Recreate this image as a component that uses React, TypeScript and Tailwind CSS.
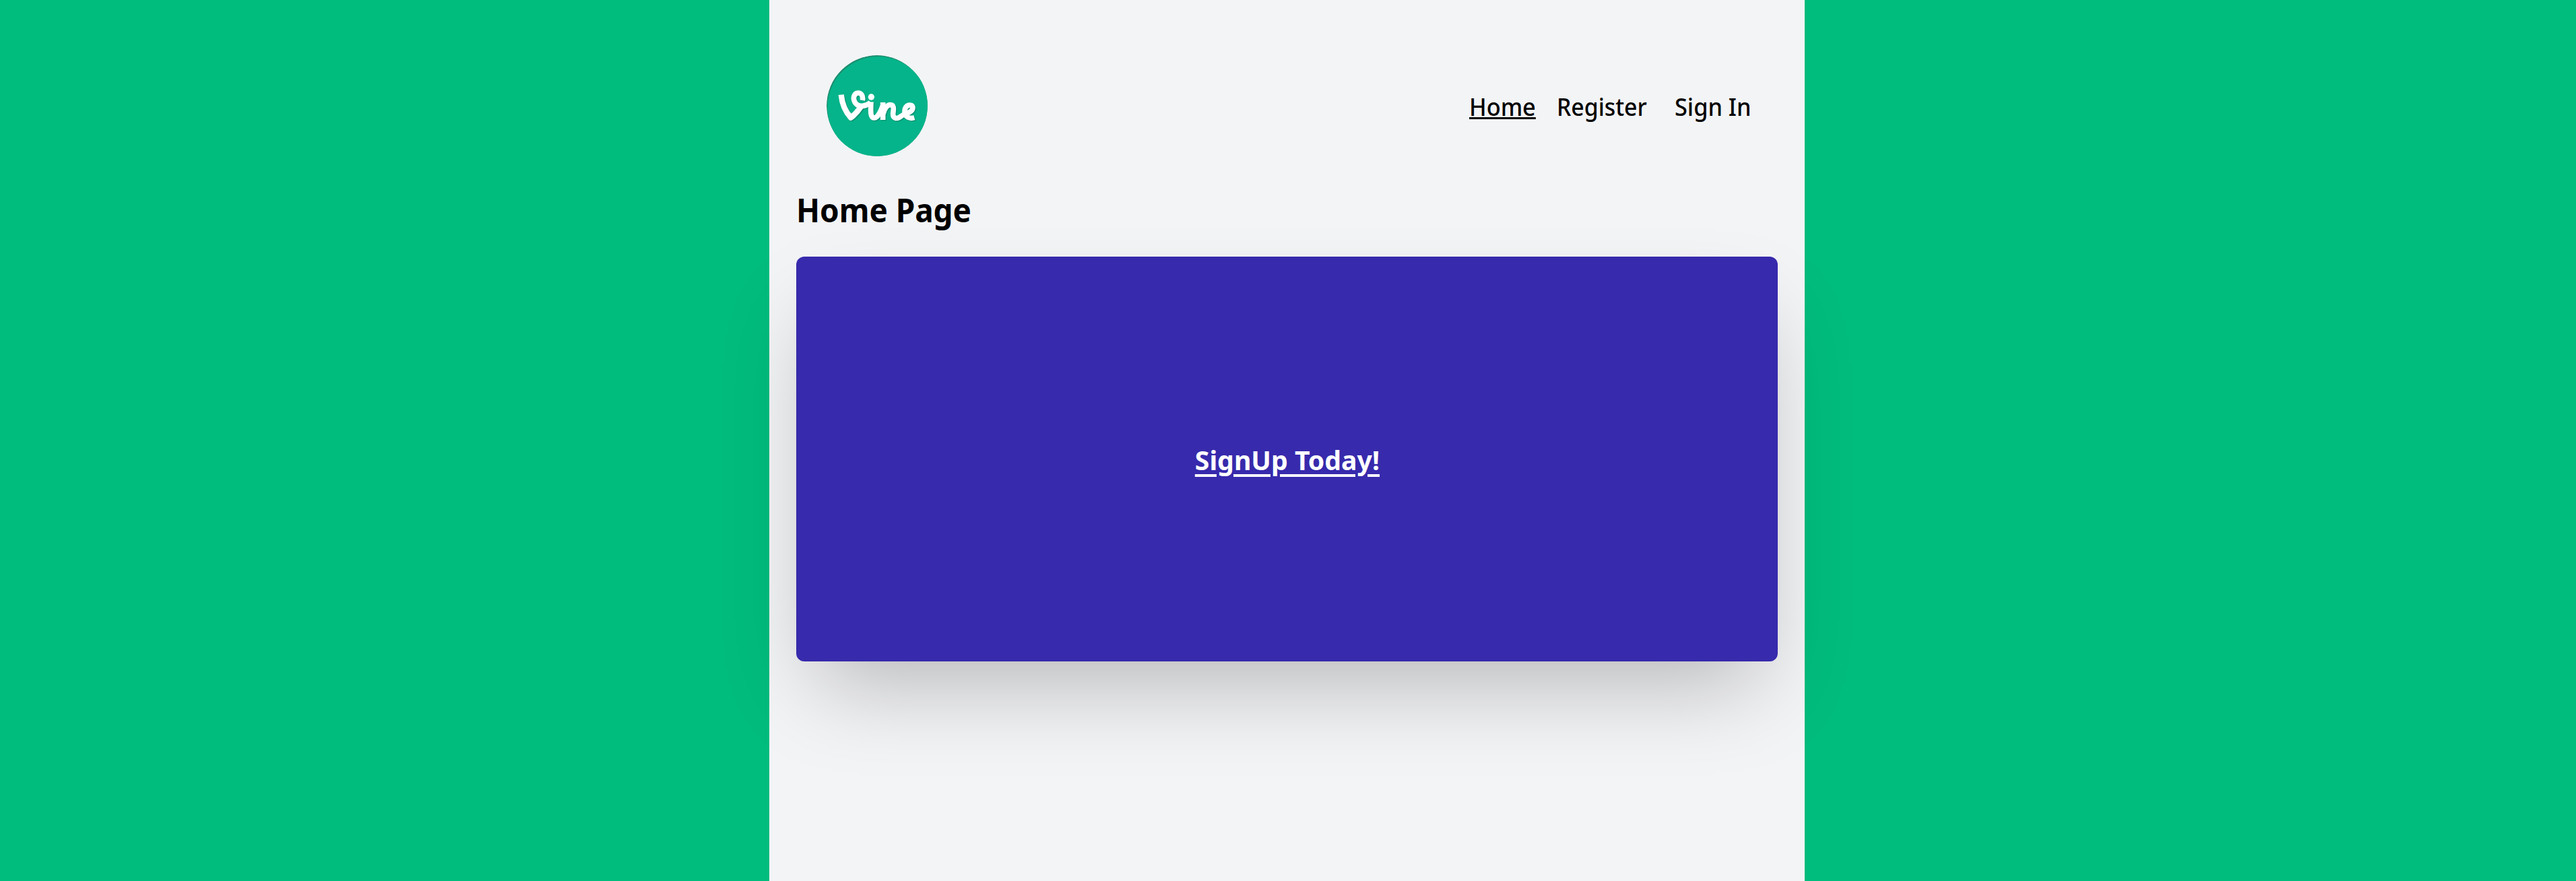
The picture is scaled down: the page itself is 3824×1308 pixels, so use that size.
function VineLogo() {
  const word = (
    <>
      <path d="M65 176C69 215 84 252 108 278C125 266 142 246 154 228" strokeWidth="25" />
      <path d="M160 201C164 182 155 168 141 168C124 168 118 188 123 202C128 220 145 228 160 226C172 225 184 220 196 211" strokeWidth="23" />
      <path d="M198 208C197 240 193 279 211 279C228 279 240 252 250 226" strokeWidth="23" />
      <path d="M251 210V288" strokeWidth="23" />
      <path d="M252 262C257 236 271 221 284 221C306 221 296 250 296 262C296 283 312 283 324 277C335 270 345 263 352 258C368 258 384 246 384 233C382 215 348 218 348 250C348 276 370 284 391 278" strokeWidth="23" />
    </>
  );
  return (
    <svg viewBox="0 0 450 450" className="size-[150px]" role="img" aria-label="Vine">
      <clipPath id="badge">
        <circle cx="225" cy="225" r="225" />
      </clipPath>
      <g clipPath="url(#badge)">
        <circle cx="225" cy="225" r="225" fill="#1d8e70" />
        <circle cx="230" cy="232" r="226" fill="#05b48a" />
      </g>
      <g fill="none" stroke="#0b7f66" strokeOpacity=".6" strokeLinejoin="round" transform="translate(4 4)">{word}</g>
      <g fill="none" stroke="#fff" strokeLinejoin="round">{word}</g>
      <circle cx="199" cy="186" r="14" fill="#fff" />
    </svg>
  );
}

export default function App() {
  return (
    <div className="h-[1308px] overflow-hidden bg-[#00bc7d] font-['Noto_Sans',sans-serif] text-black">
      <main className="ml-[1142px] h-full w-[1537px] bg-gray-100 px-[40px]">
        <header className="flex h-[277px] items-start justify-between pl-[45px] pt-[82px]">
          <VineLogo />
          <nav className="flex w-[458px] pt-[49px] text-[36.5px] font-medium leading-[54px] whitespace-nowrap">
            <div className="w-[130px]">
              <a href="#" className="inline-block origin-left scale-x-[.94] underline decoration-[3px] underline-offset-[2px]">Home</a>
            </div>
            <div className="w-[175px]">
              <a href="#" className="inline-block origin-left scale-x-[.925]">Register</a>
            </div>
            <a href="#" className="inline-block origin-left scale-x-[.94]">Sign In</a>
          </nav>
        </header>
        <div className="h-[104px]">
          <h1 className="inline-block origin-left scale-x-[.955] whitespace-nowrap text-[48px] font-bold leading-[70px]">Home Page</h1>
        </div>
        <section className="flex h-[601px] items-center justify-center rounded-[12px] bg-[#372aac] pt-[2px] shadow-[0_62.5px_125px_-30px_rgba(0,0,0,0.25)]">
          <a href="#" className="scale-x-[.98] text-[40px] font-bold leading-[60px] text-white underline decoration-[4px] underline-offset-[6px]">SignUp Today!</a>
        </section>
      </main>
    </div>
  );
}
